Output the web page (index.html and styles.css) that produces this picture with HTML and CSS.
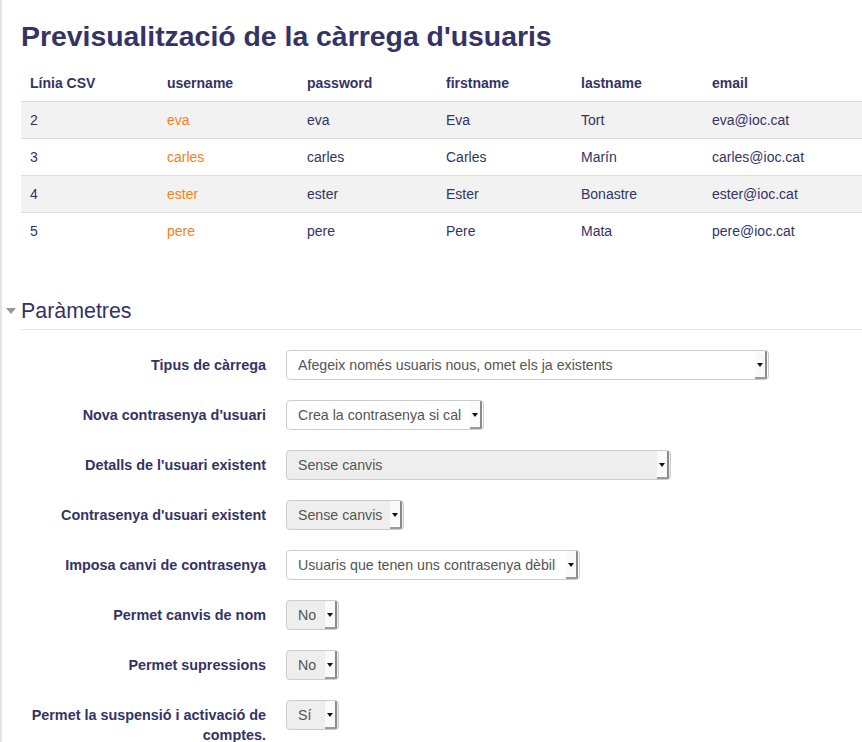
FILE: index.html
```html
<!DOCTYPE html>
<html lang="ca">
<head>
<meta charset="utf-8">
<title>Previsualització de la càrrega d'usuaris</title>
<link rel="stylesheet" href="styles.css">
</head>
<body>
<div class="page">
  <h2 class="title">Previsualització de la càrrega d'usuaris</h2>
  <table class="preview">
    <colgroup>
      <col class="c1"><col class="c2"><col class="c3"><col class="c4"><col class="c5"><col class="c6">
    </colgroup>
    <thead>
      <tr><th>Línia CSV</th><th>username</th><th>password</th><th>firstname</th><th>lastname</th><th>email</th></tr>
    </thead>
    <tbody>
      <tr><td>2</td><td class="user">eva</td><td>eva</td><td>Eva</td><td>Tort</td><td>eva@ioc.cat</td></tr>
      <tr><td>3</td><td class="user">carles</td><td>carles</td><td>Carles</td><td>Marín</td><td>carles@ioc.cat</td></tr>
      <tr><td>4</td><td class="user">ester</td><td>ester</td><td>Ester</td><td>Bonastre</td><td>ester@ioc.cat</td></tr>
      <tr><td>5</td><td class="user">pere</td><td>pere</td><td>Pere</td><td>Mata</td><td>pere@ioc.cat</td></tr>
    </tbody>
  </table>

  <div class="section">
    <div class="legend">
      <span class="caret"></span>
      <span class="legend-text">Paràmetres</span>
    </div>
    <div class="form">
      <div class="row">
        <label class="lbl">Tipus de càrrega</label>
        <div class="sel w1"><span class="sel-text">Afegeix només usuaris nous, omet els ja existents</span><span class="sel-btn"><i></i></span></div>
      </div>
      <div class="row">
        <label class="lbl">Nova contrasenya d'usuari</label>
        <div class="sel w2"><span class="sel-text">Crea la contrasenya si cal</span><span class="sel-btn"><i></i></span></div>
      </div>
      <div class="row">
        <label class="lbl">Detalls de l'usuari existent</label>
        <div class="sel w3 dis"><span class="sel-text">Sense canvis</span><span class="sel-btn"><i></i></span></div>
      </div>
      <div class="row">
        <label class="lbl">Contrasenya d'usuari existent</label>
        <div class="sel w4 dis"><span class="sel-text">Sense canvis</span><span class="sel-btn"><i></i></span></div>
      </div>
      <div class="row">
        <label class="lbl">Imposa canvi de contrasenya</label>
        <div class="sel w5"><span class="sel-text">Usuaris que tenen uns contrasenya dèbil</span><span class="sel-btn"><i></i></span></div>
      </div>
      <div class="row">
        <label class="lbl">Permet canvis de nom</label>
        <div class="sel w6 dis"><span class="sel-text">No</span><span class="sel-btn"><i></i></span></div>
      </div>
      <div class="row">
        <label class="lbl">Permet supressions</label>
        <div class="sel w6 dis"><span class="sel-text">No</span><span class="sel-btn"><i></i></span></div>
      </div>
      <div class="row">
        <label class="lbl">Permet la suspensió i activació de comptes.</label>
        <div class="sel w6 dis"><span class="sel-text">Sí</span><span class="sel-btn"><i></i></span></div>
      </div>
    </div>
  </div>
</div>
</body>
</html>
```

FILE: styles.css
```css
html, body {
  margin: 0;
  padding: 0;
  background: #fff;
}
body {
  font-family: "Liberation Sans", Arial, Helvetica, sans-serif;
  font-size: 14px;
  color: #333366;
}
.page {
  border-left: 2px solid #e4e4e4;
  padding-left: 19px;
  min-height: 742px;
  box-sizing: border-box;
}
.title {
  margin: 0;
  padding-top: 18px;
  font-size: 28.4px;
  line-height: 36px;
  font-weight: bold;
  color: #333366;
}
.preview {
  margin-top: 10px;
  width: 841px;
  border-collapse: collapse;
  table-layout: fixed;
}
.c1 { width: 137px; }
.c2 { width: 140px; }
.c3 { width: 139px; }
.c4 { width: 135px; }
.c5 { width: 131px; }
.c6 { width: 159px; }
.preview th,
.preview td {
  text-align: left;
  padding: 8px 9px;
  line-height: 20px;
  vertical-align: middle;
}
.preview th {
  font-weight: bold;
  padding-top: 9px;
  padding-bottom: 8px;
}
.preview td {
  border-top: 1px solid #dddddd;
}
.preview tbody tr:nth-child(odd) td {
  background: #f2f2f2;
}
.preview .user {
  color: #f98012;
}
.section {
  margin-top: 46px;
}
.legend {
  display: flex;
  align-items: center;
  margin-left: -17px;
}
.caret {
  width: 17px;
  height: 34px;
  flex: none;
  position: relative;
}
.caret::after {
  content: "";
  position: absolute;
  left: 2px;
  top: 12px;
  border-left: 5px solid transparent;
  border-right: 5px solid transparent;
  border-top: 6px solid #999;
}
.legend-text {
  flex: 1;
  font-size: 21.4px;
  line-height: 32px;
  padding-bottom: 2px;
  border-bottom: 1px solid #e5e5e5;
  color: #333366;
}
.form {
  padding-top: 20px;
}
.row {
  display: flex;
  align-items: flex-start;
  gap: 20px;
  margin-bottom: 20px;
}
.lbl {
  width: 245px;
  flex: none;
  text-align: right;
  font-weight: bold;
  font-size: 14.4px;
  line-height: 20px;
  padding-top: 5px;
}
.sel {
  display: flex;
  align-items: stretch;
  height: 30px;
  box-sizing: border-box;
  border: 1px solid #cccccc;
  border-radius: 4px;
  background: #fff;
  color: #555555;
  font-size: 14.2px;
  padding: 0 1px 0 11px;
  overflow: hidden;
}
.sel.dis {
  background: #eeeeee;
}
.sel-text {
  flex: 1;
  line-height: 28px;
  white-space: nowrap;
  overflow: hidden;
}
.sel-btn {
  flex: none;
  width: 10px;
  background: #fafafa;
  border-right: 2px solid #8a8a8a;
  border-bottom: 2px solid #9a9a9a;
  display: flex;
  align-items: center;
  justify-content: center;
}
.sel-btn i {
  display: block;
  border-left: 3px solid transparent;
  border-right: 3px solid transparent;
  border-top: 4px solid #111;
  margin-top: 2px;
}
.w1 { width: 483px; }
.w2 { width: 198px; }
.w3 { width: 385px; }
.w4 { width: 118px; }
.w5 { width: 294px; }
.w6 { width: 53px; }
```
